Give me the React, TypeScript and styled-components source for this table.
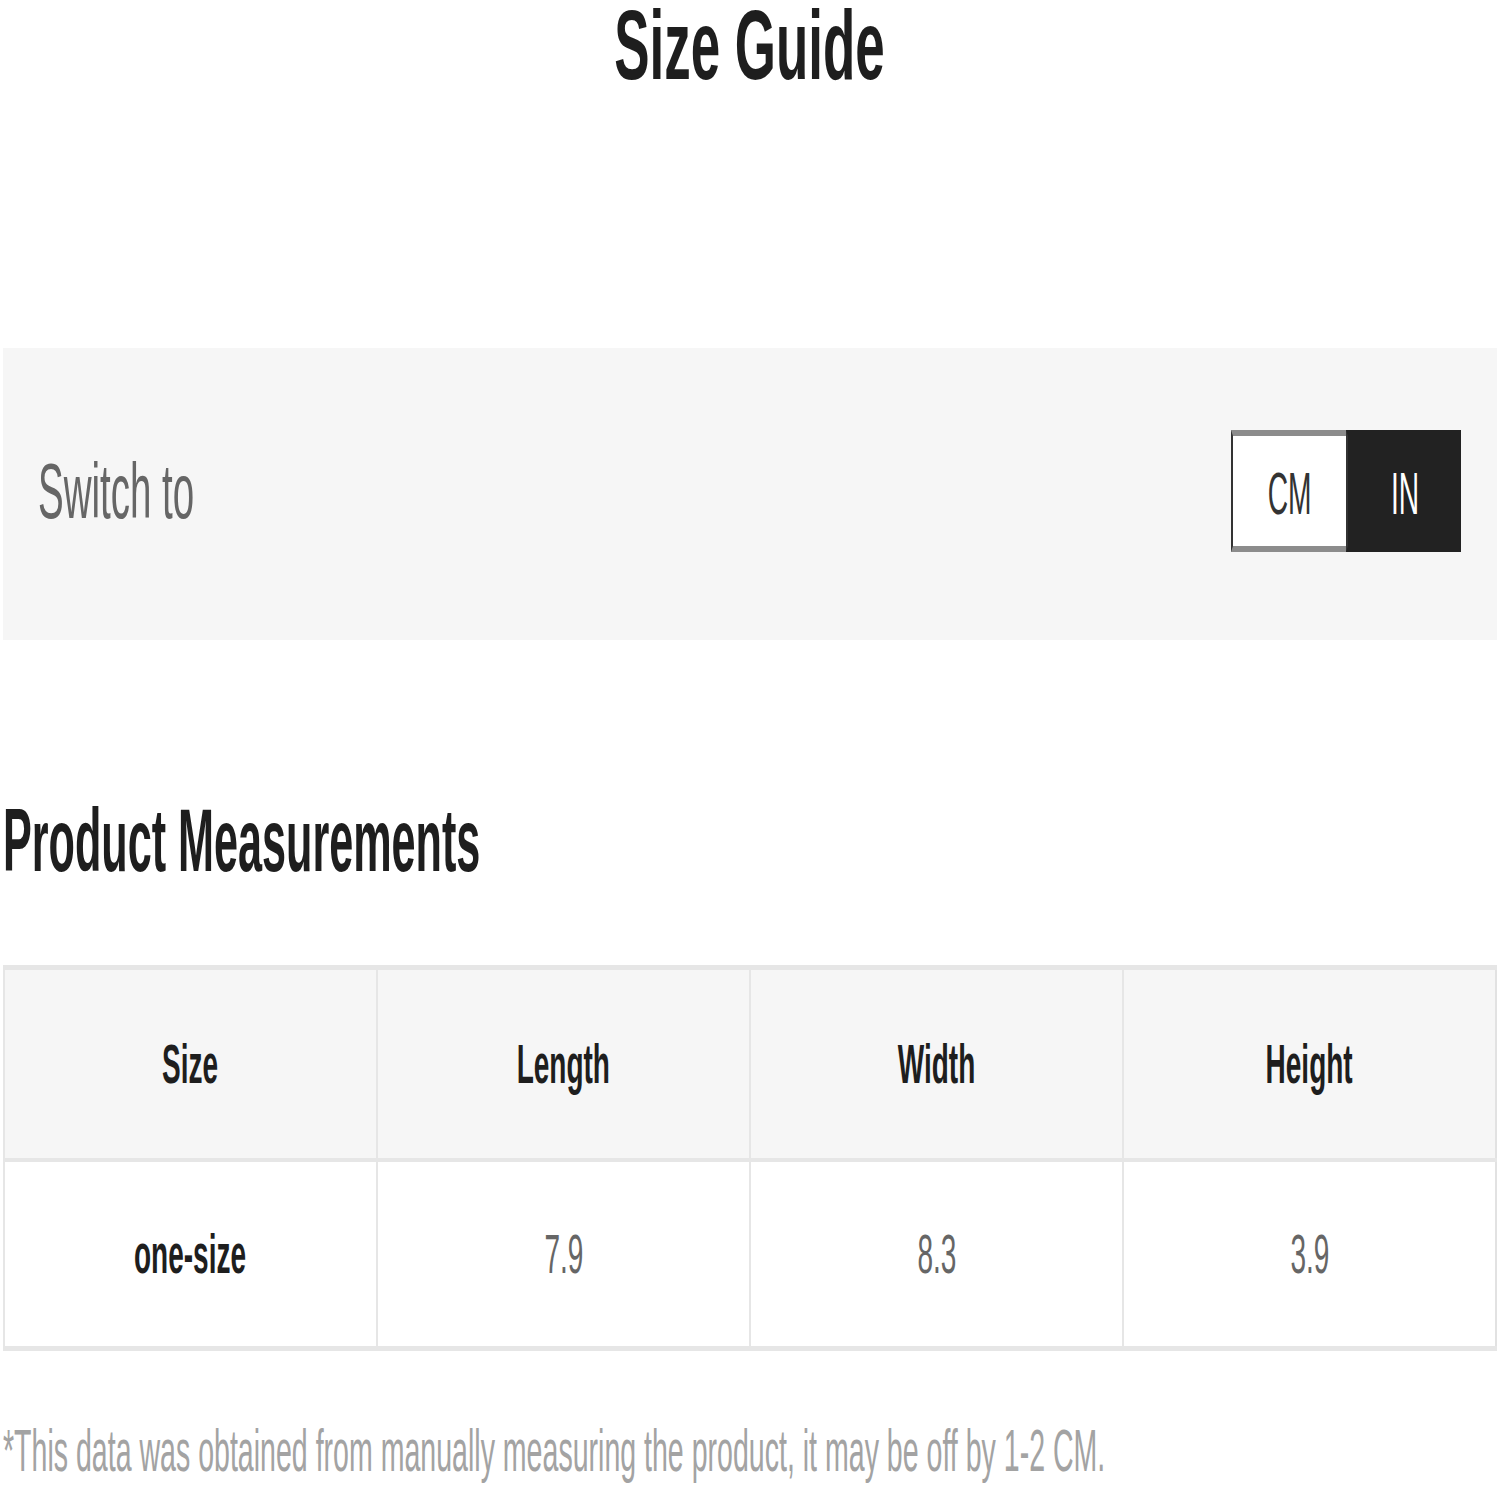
import React, { useState } from "react";
import styled, { createGlobalStyle } from "styled-components";

type Unit = "CM" | "IN";

type Row = {
  size: string;
  length: number;
  width: number;
  height: number;
};

const ROWS: Row[] = [{ size: "one-size", length: 20, width: 21, height: 10 }];

const COLUMNS = ["Size", "Length", "Width", "Height"];

function convert(value: number, unit: Unit) {
  if (unit === "CM") return value.toFixed(0);
  return (value / 2.54).toFixed(1);
}

export default function App() {
  const [unit, setUnit] = useState<Unit>("IN");

  return (
    <>
      <GlobalStyle />
      <Page>
        <Title>
          <Narrow $scale={0.54}>Size Guide</Narrow>
        </Title>

        <SwitchPanel>
          <SwitchLabel>
            <Narrow $origin="left">Switch to</Narrow>
          </SwitchLabel>
          <Toggle>
            <ToggleButton $active={unit === "CM"} onClick={() => setUnit("CM")}>
              <Narrow $scale={0.47}>CM</Narrow>
            </ToggleButton>
            <ToggleButton $active={unit === "IN"} onClick={() => setUnit("IN")}>
              <Narrow $scale={0.47}>IN</Narrow>
            </ToggleButton>
          </Toggle>
        </SwitchPanel>

        <SectionTitle>
          <Narrow $scale={0.485} $origin="left">
            Product Measurements
          </Narrow>
        </SectionTitle>

        <Table>
          <thead>
            <tr>
              {COLUMNS.map((col) => (
                <HeadCell key={col}>
                  <Narrow>{col}</Narrow>
                </HeadCell>
              ))}
            </tr>
          </thead>
          <tbody>
            {ROWS.map((row) => (
              <tr key={row.size}>
                <BodyCell $strong>
                  <Narrow>{row.size}</Narrow>
                </BodyCell>
                <BodyCell>
                  <Narrow>{convert(row.length, unit)}</Narrow>
                </BodyCell>
                <BodyCell>
                  <Narrow>{convert(row.width, unit)}</Narrow>
                </BodyCell>
                <BodyCell>
                  <Narrow>{convert(row.height, unit)}</Narrow>
                </BodyCell>
              </tr>
            ))}
          </tbody>
        </Table>

        <Note>
          <Narrow $scale={0.793} $scaleY={1.667} $origin="left">
            *This data was obtained from manually measuring the product, it may be off by 1-2 CM.
          </Narrow>
        </Note>
      </Page>
    </>
  );
}

const GlobalStyle = createGlobalStyle`
  html, body {
    margin: 0;
    padding: 0;
    background: #ffffff;
  }
  body {
    font-family: "Liberation Sans", Arial, sans-serif;
    color: #1e1e1e;
  }
`;

// the reference text is drawn in a condensed face, so squeeze the glyphs horizontally
const Narrow = styled.span<{ $scale?: number; $scaleY?: number; $origin?: "left" | "center" }>`
  display: inline-block;
  white-space: nowrap;
  transform: scale(${(p) => p.$scale ?? 0.5}, ${(p) => p.$scaleY ?? 1});
  transform-origin: ${(p) => p.$origin ?? "center"} center;
`;

const Page = styled.div`
  width: 1500px;
  min-height: 1500px;
  padding: 0 3px;
  box-sizing: border-box;
  display: flex;
  flex-direction: column;
`;

const Title = styled.h1`
  margin: 0;
  font-size: 98px;
  line-height: 90px;
  font-weight: 700;
  text-align: center;
  color: #1e1e1e;
`;

const SwitchPanel = styled.div`
  margin-top: 258px;
  height: 292px;
  background: #f6f6f6;
  display: flex;
  align-items: center;
  justify-content: space-between;
  padding: 0 36px 6px 35px;
  box-sizing: border-box;
`;

const SwitchLabel = styled.div`
  font-size: 77px;
  line-height: 77px;
  color: #666666;
`;

const Toggle = styled.div`
  display: flex;
  height: 122px;
`;

const ToggleButton = styled.button<{ $active: boolean }>`
  width: 115px;
  height: 122px;
  margin: 0;
  padding: 6px 0 0;
  font-family: "Liberation Sans", Arial, sans-serif;
  font-size: 60px;
  line-height: 60px;
  cursor: pointer;
  box-sizing: border-box;
  border: none;
  border-top: 6px solid ${(p) => (p.$active ? "#222222" : "#8c8c8c")};
  border-bottom: 6px solid ${(p) => (p.$active ? "#222222" : "#8c8c8c")};
  border-left: 2px solid #333333;
  background: ${(p) => (p.$active ? "#222222" : "#ffffff")};
  color: ${(p) => (p.$active ? "#ffffff" : "#333333")};
`;

const SectionTitle = styled.h2`
  margin: 156px 0 0;
  font-size: 89px;
  line-height: 89px;
  font-weight: 700;
  color: #1e1e1e;
`;

const Table = styled.table`
  margin-top: 80px;
  width: 100%;
  border-collapse: collapse;
  table-layout: fixed;
  border-left: 2px solid #e2e2e2;
  border-right: 2px solid #e2e2e2;
`;

const HeadCell = styled.th`
  height: 188px;
  padding: 0;
  background: #f6f6f6;
  border-top: 5px solid #e6e6e6;
  border-bottom: 4px solid #e6e6e6;
  border-left: 2px solid #e6e6e6;
  font-size: 56px;
  line-height: 56px;
  font-weight: 700;
  color: #1e1e1e;
  text-align: center;
  vertical-align: middle;
`;

const BodyCell = styled.td<{ $strong?: boolean }>`
  height: 184px;
  padding: 0;
  background: #ffffff;
  border-bottom: 5px solid #e6e6e6;
  border-left: 2px solid #e6e6e6;
  font-size: 56px;
  line-height: 56px;
  font-weight: ${(p) => (p.$strong ? 700 : 400)};
  color: ${(p) => (p.$strong ? "#1e1e1e" : "#666666")};
  text-align: center;
  vertical-align: middle;
`;

const Note = styled.div`
  margin-top: 82px;
  font-size: 36px;
  line-height: 36px;
  color: #a3a3a3;
`;
